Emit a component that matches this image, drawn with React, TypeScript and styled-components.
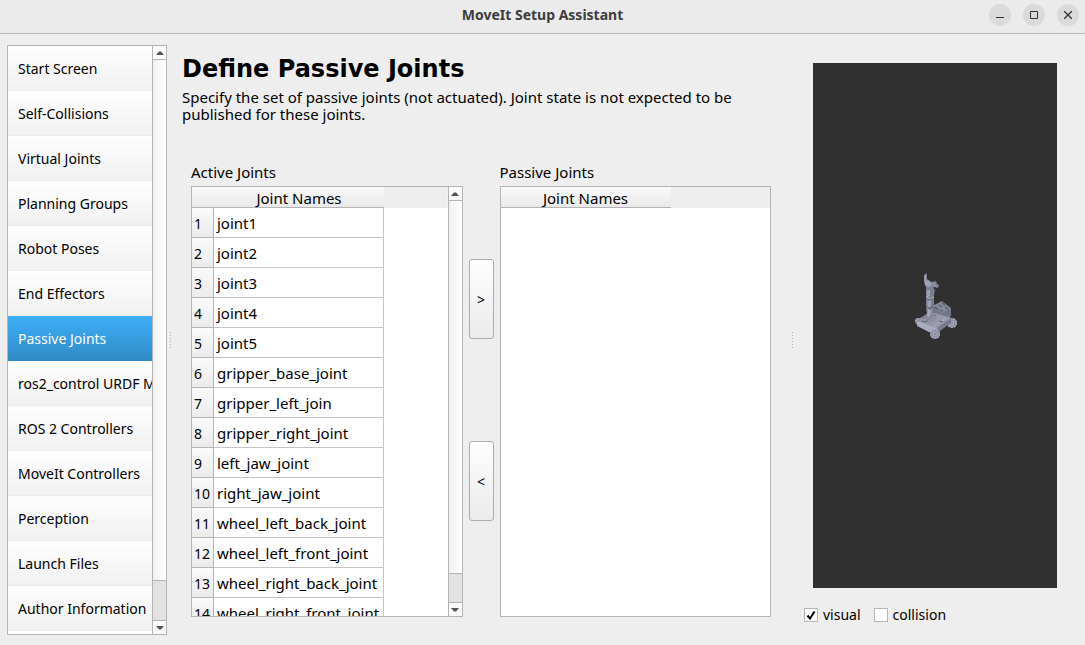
import React, { useState } from "react";
import styled, { createGlobalStyle, css } from "styled-components";

const GlobalStyle = createGlobalStyle`
  *, *::before, *::after { box-sizing: border-box; }
  body {
    margin: 0;
    background: #eeeeee;
    color: #000;
    font: 14px/18px "Noto Sans", "Open Sans", sans-serif;
  }
  button, input { font: inherit; color: inherit; }
`;

const line = "#b4b4b4";

const Window = styled.div`
  display: flex;
  flex-direction: column;
  height: 100vh;
  min-height: 420px;
`;

const TitleBar = styled.header`
  display: grid;
  grid-template-columns: 1fr auto 1fr;
  align-items: center;
  height: 34px;
  padding: 0 6px 4px;
  flex: none;
  background: #ebebeb;
  border-bottom: 1px solid #b8b8b8;
`;

const WindowTitle = styled.div`
  grid-column: 2;
  font-size: 14px;
  font-weight: 700;
  color: #3d3d3d;
`;

const WindowControls = styled.div`
  display: flex;
  justify-content: flex-end;
  gap: 12px;
`;

const WindowButton = styled.button`
  display: grid;
  place-items: center;
  width: 22px;
  height: 22px;
  padding: 0;
  border: 0;
  border-radius: 50%;
  background: #dadada;
`;

const Body = styled.div`
  flex: 1;
  min-height: 0;
  display: grid;
  grid-template-columns: 160px 7px minmax(0, 1fr) 7px 289px;
  padding-left: 7px;
`;

const Sidebar = styled.nav`
  display: flex;
  min-height: 0;
  margin: 11px 0 10px;
  border: 1px solid ${line};
  background: #fff;
`;

const StepList = styled.ul`
  flex: 1;
  min-width: 0;
  margin: 0;
  padding: 0;
  list-style: none;
  overflow: hidden;
`;

const StepButton = styled.button<{ $active: boolean }>`
  display: block;
  width: 100%;
  height: 45px;
  padding: 2px 0 0 10px;
  border: 0;
  border-bottom: 1px solid #ebebeb;
  background: linear-gradient(#fefefe, #f1f1f1);
  text-align: left;
  white-space: nowrap;
  overflow: hidden;
  ${(p) =>
    p.$active &&
    css`
      border-color: #308cc6;
      background: linear-gradient(#3daef8, #308cc6);
      color: #fff;
    `}
`;

const ScrollTrack = styled.div`
  display: flex;
  flex-direction: column;
  flex: none;
  width: 14px;
  border-left: 1px solid ${line};
  background: #e2e2e2;
`;

const ScrollArrow = styled.button`
  display: grid;
  place-items: center;
  height: 13px;
  padding: 0;
  border: 0;
  background: #fafafa;
`;

const ScrollThumb = styled.div`
  flex: 1;
  border: solid ${line};
  border-width: 1px 0;
  background: linear-gradient(90deg, #f0f0f0, #ffffff);
`;

const ScrollRest = styled.div<{ $size: number }>`
  height: ${(p) => p.$size}px;
  border-bottom: 1px solid ${line};
`;

const SplitHandle = styled.div`
  align-self: center;
  justify-self: center;
  width: 1px;
  height: 16px;
  background: repeating-linear-gradient(#b0b0b0 0 1px, transparent 1px 3px);
`;

const Main = styled.main`
  display: flex;
  flex-direction: column;
  min-height: 0;
  padding: 21px 18px 28px 8px;
  font-size: 15px;
`;

const Heading = styled.h1`
  margin: 0 0 6px;
  font: 700 24px/28px "DejaVu Sans", sans-serif;
`;

const Description = styled.p`
  max-width: 570px;
  margin: 0 0 40px;
  line-height: 17px;
`;

const Transfer = styled.div`
  flex: 1;
  min-height: 0;
  display: grid;
  grid-template-columns: minmax(0, 1fr) 25px minmax(0, 1fr);
  gap: 6px;
  padding-left: 9px;
`;

const JointPanel = styled.section`
  display: flex;
  flex-direction: column;
  min-height: 0;
`;

const PanelLabel = styled.h2`
  margin: 0 0 5px;
  font-size: 15px;
  font-weight: 400;
  line-height: 18px;
`;

const TableFrame = styled.div`
  flex: 1;
  min-height: 0;
  display: flex;
  border: 1px solid ${line};
  background: #fff;
`;

const TableArea = styled.div`
  flex: 1;
  min-width: 0;
  overflow: hidden;
  background: linear-gradient(#eeeeee, #eeeeee) top / 100% 21px no-repeat;
`;

const JointTable = styled.table<{ $width: number }>`
  width: ${(p) => p.$width}px;
  table-layout: fixed;
  border-collapse: separate;
  border-spacing: 0;
`;

const NumberCol = styled.col`
  width: 22px;
`;

const ColumnHead = styled.th`
  height: 21px;
  padding: 2px 0 0;
  border-bottom: 1px solid ${line};
  background: linear-gradient(#fafafa, #e9e9e9);
  font-weight: 400;
  line-height: 18px;
`;

const RowHead = styled.th`
  height: 30px;
  padding: 2px 0 0 2px;
  border: solid ${line};
  border-width: 0 1px 1px 0;
  background: linear-gradient(#fafafa, #ebebeb);
  font-size: 14px;
  font-weight: 400;
  text-align: left;
`;

const Cell = styled.td`
  height: 30px;
  padding: 0 0 0 3px;
  border: solid #c4c4c4;
  border-width: 0 1px 1px 0;
  white-space: nowrap;
`;

const TransferButtons = styled.div`
  display: flex;
  flex-direction: column;
  justify-content: center;
  gap: 102px;
`;

const TransferButton = styled.button`
  height: 80px;
  padding: 2px 0 0;
  border: 1px solid #acacac;
  border-radius: 3px;
  background: linear-gradient(#fefefe, #ebebeb);
  font-size: 14px;
`;

const Preview = styled.aside`
  display: flex;
  flex-direction: column;
  min-height: 0;
  padding: 29px 28px 21px 8px;
`;

const Viewport = styled.div`
  flex: 1;
  min-height: 0;
  display: grid;
  place-items: center;
  margin-left: 9px;
  padding-bottom: 42px;
  background: #303030;
`;

const Options = styled.div`
  display: flex;
  gap: 13px;
  padding-top: 18px;
`;

const Option = styled.label`
  display: flex;
  align-items: center;
  gap: 5px;
`;

const CheckBox = styled.span`
  display: grid;
  width: 14px;
  height: 14px;
  > * { grid-area: 1 / 1; }
  svg { pointer-events: none; visibility: hidden; }
  input:checked + svg { visibility: visible; }
`;

const CheckInput = styled.input`
  appearance: none;
  width: 14px;
  height: 14px;
  margin: 0;
  border: 1px solid #b6b6b6;
  background: #fff;
`;

const steps = [
  "Start Screen",
  "Self-Collisions",
  "Virtual Joints",
  "Planning Groups",
  "Robot Poses",
  "End Effectors",
  "Passive Joints",
  "ros2_control URDF Modifications",
  "ROS 2 Controllers",
  "MoveIt Controllers",
  "Perception",
  "Launch Files",
  "Author Information",
];

const joints = [
  "joint1",
  "joint2",
  "joint3",
  "joint4",
  "joint5",
  "gripper_base_joint",
  "gripper_left_join",
  "gripper_right_joint",
  "left_jaw_joint",
  "right_jaw_joint",
  "wheel_left_back_joint",
  "wheel_left_front_joint",
  "wheel_right_back_joint",
  "wheel_right_front_joint",
];

function ScrollBar({ rest }: { rest: number }) {
  return (
    <ScrollTrack>
      <ScrollArrow aria-label="Scroll up">
        <svg width="8" height="4" viewBox="0 0 8 4"><path d="M0 4 3 .5h2L8 4z" fill="#555" /></svg>
      </ScrollArrow>
      <ScrollThumb />
      <ScrollRest $size={rest} />
      <ScrollArrow aria-label="Scroll down">
        <svg width="8" height="4" viewBox="0 0 8 4"><path d="M0 0h8L5 3.5H3z" fill="#555" /></svg>
      </ScrollArrow>
    </ScrollTrack>
  );
}

function Wheel({ x, y, r }: { x: number; y: number; r: number }) {
  return (
    <g transform={`translate(${x} ${y})`}>
      <circle r={r} fill="#8e91a2" />
      <circle r={r - 0.7} fill="none" stroke="#a9acbe" strokeWidth="1.4" strokeDasharray="1.5 1.5" />
      <circle r={r / 2.2} fill="#a3a6b8" />
      <circle r="0.8" fill="#666977" />
    </g>
  );
}

function Robot() {
  return (
    <svg width="48" height="72" viewBox="0 0 48 72" role="img" aria-label="Robot model">
      <Wheel x={7} y={52} r={3} />
      <Wheel x={41} y={54} r={5} />
      <path d="M21 37 31 32l9 7v8l-8 6-13-4z" fill="#737686" />
      <path d="m22 37 8-4 9 6-8 5z" fill="#868999" />
      <path d="m24 38 3 2m1-4 3 2m0-4 3 2m-5 5 3 1m2-4 3 2" stroke="#555864" strokeWidth="1.2" />
      <path d="m6 51 13-8 20 5 2 4-15 12-8-1L5 55z" fill="#8b8e9f" />
      <path d="m7 51 15-7 18 5-14 10z" fill="#9799ab" />
      <path d="m6 52 20 7v5l-8-1L6 57z" fill="#a9acbd" />
      <path d="m26 59 14-10v5L26 64z" fill="#777a8a" />
      <path d="m10 49 7-4 9 4-8 5z" fill="#808393" />
      <path d="m13 51 6-5m-2 7 7-5m-1 9 12-8M9 54l12 5" stroke="#b1b4c4" strokeWidth=".8" />
      <path d="m11 52 5 1m4-8 5 2m3 5 4 1" stroke="#606370" />
      <Wheel x={24} y={65} r={5} />
      <path d="m15 39 7-1v5l2 3-4 5-7-2 3-5z" fill="#858899" />
      <path d="m17 40 3 1-1 7-3-1z" fill="#a5a8b9" />
      <path d="m15 18 6-1 3 4-1 5v12l-4 3-4-3z" fill="#7b7e8f" />
      <path d="M16 21h3v6l-3 1zM16 32l4-1v7l-3 1z" fill="#9da0b2" />
      <path d="m15 27 4 3 4-2" fill="none" stroke="#b5b8c8" />
      <path d="m17 31 5-1m-5 9 5-1" stroke="#5e6170" />
      <path d="m13 6 3-2v6l5 3 4-1 1 3 2 1-1 3-3-1-5 2-5-3-1-5z" fill="#808394" />
      <path d="m13 6 2 1v4l4 2 2 3-4 2-3-3z" fill="#a0a3b4" />
      <path d="m21 14 3 1m-1 1 3 2" stroke="#a6a9ba" strokeWidth=".8" />
    </svg>
  );
}

function JointList({ title, names, numbered }: { title: string; names: string[]; numbered?: boolean }) {
  return (
    <JointPanel>
      <PanelLabel>{title}</PanelLabel>
      <TableFrame>
        <TableArea>
          <JointTable $width={numbered ? 192 : 170} aria-label={title}>
            <colgroup>
              {numbered && <NumberCol />}
              <col />
            </colgroup>
            <thead>
              <tr>
                {numbered && <ColumnHead as="td" />}
                <ColumnHead scope="col">Joint Names</ColumnHead>
              </tr>
            </thead>
            <tbody>
              {names.map((name, i) => (
                <tr key={name}>
                  <RowHead scope="row">{i + 1}</RowHead>
                  <Cell>{name}</Cell>
                </tr>
              ))}
            </tbody>
          </JointTable>
        </TableArea>
        {numbered && <ScrollBar rest={29} />}
      </TableFrame>
    </JointPanel>
  );
}

function CheckOption({ label, initial }: { label: string; initial: boolean }) {
  const [checked, setChecked] = useState(initial);
  return (
    <Option>
      <CheckBox>
        <CheckInput type="checkbox" checked={checked} onChange={() => setChecked(!checked)} />
        <svg width="14" height="14" viewBox="0 0 14 14">
          <path d="m3.5 7.5 2.5 3 4.5-7" fill="none" stroke="#000" strokeWidth="2" />
        </svg>
      </CheckBox>
      {label}
    </Option>
  );
}

export default function App() {
  const [current, setCurrent] = useState("Passive Joints");
  return (
    <Window>
      <GlobalStyle />
      <TitleBar>
        <WindowTitle>MoveIt Setup Assistant</WindowTitle>
        <WindowControls>
          <WindowButton aria-label="Minimize">
            <svg width="10" height="10" viewBox="0 0 10 10"><path d="M1 7.5h8" stroke="#333" /></svg>
          </WindowButton>
          <WindowButton aria-label="Maximize">
            <svg width="10" height="10" viewBox="0 0 10 10"><path d="M1.5 1.5h7v7h-7z" fill="none" stroke="#333" /></svg>
          </WindowButton>
          <WindowButton aria-label="Close">
            <svg width="10" height="10" viewBox="0 0 10 10"><path d="m1.2 1.2 7.6 7.6m0-7.6L1.2 8.8" stroke="#333" strokeWidth="1.3" /></svg>
          </WindowButton>
        </WindowControls>
      </TitleBar>
      <Body>
        <Sidebar aria-label="Setup steps">
          <StepList>
            {steps.map((step) => (
              <li key={step}>
                <StepButton $active={step === current} onClick={() => setCurrent(step)}>{step}</StepButton>
              </li>
            ))}
          </StepList>
          <ScrollBar rest={40} />
        </Sidebar>
        <SplitHandle />
        <Main>
          <Heading>Define Passive Joints</Heading>
          <Description>
            Specify the set of passive joints (not actuated). Joint state is not expected to be published for these joints.
          </Description>
          <Transfer>
            <JointList title="Active Joints" names={joints} numbered />
            <TransferButtons>
              <TransferButton aria-label="Move to passive joints">&gt;</TransferButton>
              <TransferButton aria-label="Move to active joints">&lt;</TransferButton>
            </TransferButtons>
            <JointList title="Passive Joints" names={[]} />
          </Transfer>
        </Main>
        <SplitHandle />
        <Preview>
          <Viewport>
            <Robot />
          </Viewport>
          <Options>
            <CheckOption label="visual" initial />
            <CheckOption label="collision" initial={false} />
          </Options>
        </Preview>
      </Body>
    </Window>
  );
}
